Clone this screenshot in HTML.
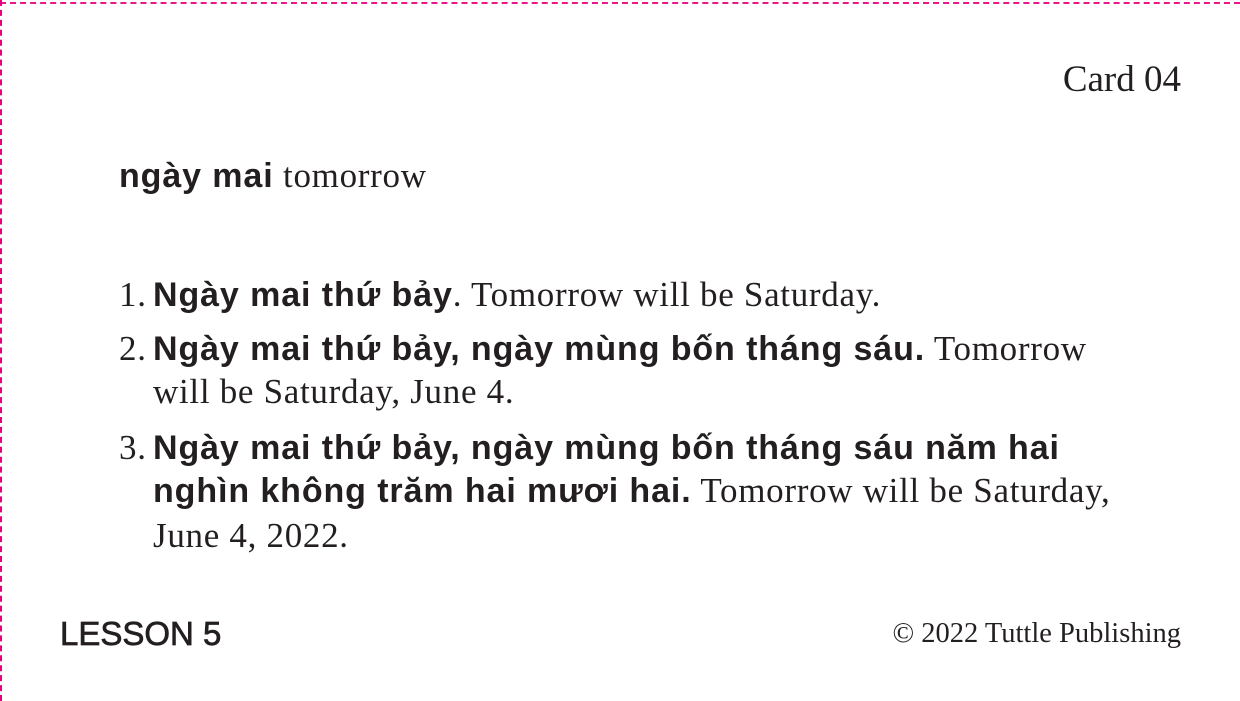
<!DOCTYPE html>
<html><head><meta charset="utf-8"><style>
html,body{margin:0;padding:0;background:#fff;}
body{width:1240px;height:701px;position:relative;overflow:hidden;font-family:"Liberation Serif",serif;color:#231f20;}
.bt{position:absolute;left:0;top:2px;width:1240px;border-top:2px dashed #e6007e;opacity:.9}
.bl{position:absolute;left:0;top:0;height:701px;border-left:2px dashed #e6007e;}
.l{position:absolute;white-space:nowrap;font-size:35px;letter-spacing:0.7px;line-height:1;}
b{font-family:"Liberation Sans",sans-serif;font-weight:bold;font-size:34px;letter-spacing:0.9px;}
</style></head><body>
<div class="bt"></div><div class="bl"></div>
<div class="l" style="right:59px;top:61px;font-size:37px;letter-spacing:0;">Card 04</div>
<div class="l" style="left:119px;top:158px;"><b>ngày mai</b> tomorrow</div>
<div class="l" style="left:119px;top:277px;">1.</div>
<div class="l" style="left:153px;top:277px;"><b>Ngày mai thứ bảy</b>. Tomorrow will be Saturday.</div>
<div class="l" style="left:119px;top:331px;">2.</div>
<div class="l" style="left:153px;top:331px;"><b>Ngày mai thứ bảy, ngày mùng bốn tháng sáu.</b> Tomorrow</div>
<div class="l" style="left:153px;top:374px;">will be Saturday, June 4.</div>
<div class="l" style="left:119px;top:430px;">3.</div>
<div class="l" style="left:153px;top:430px;"><b>Ngày mai thứ bảy, ngày mùng bốn tháng sáu năm hai</b></div>
<div class="l" style="left:153px;top:473px;"><b>nghìn không trăm hai mươi hai.</b> Tomorrow will be Saturday,</div>
<div class="l" style="left:153px;top:518px;">June 4, 2022.</div>
<div class="l" style="left:60px;top:616px;letter-spacing:0;"><b style="font-weight:normal;font-size:33px;letter-spacing:0;-webkit-text-stroke:0.7px #231f20;">LESSON 5</b></div>
<div class="l" style="right:59px;top:620px;font-size:28.5px;letter-spacing:0;">© 2022 Tuttle Publishing</div>
</body></html>
